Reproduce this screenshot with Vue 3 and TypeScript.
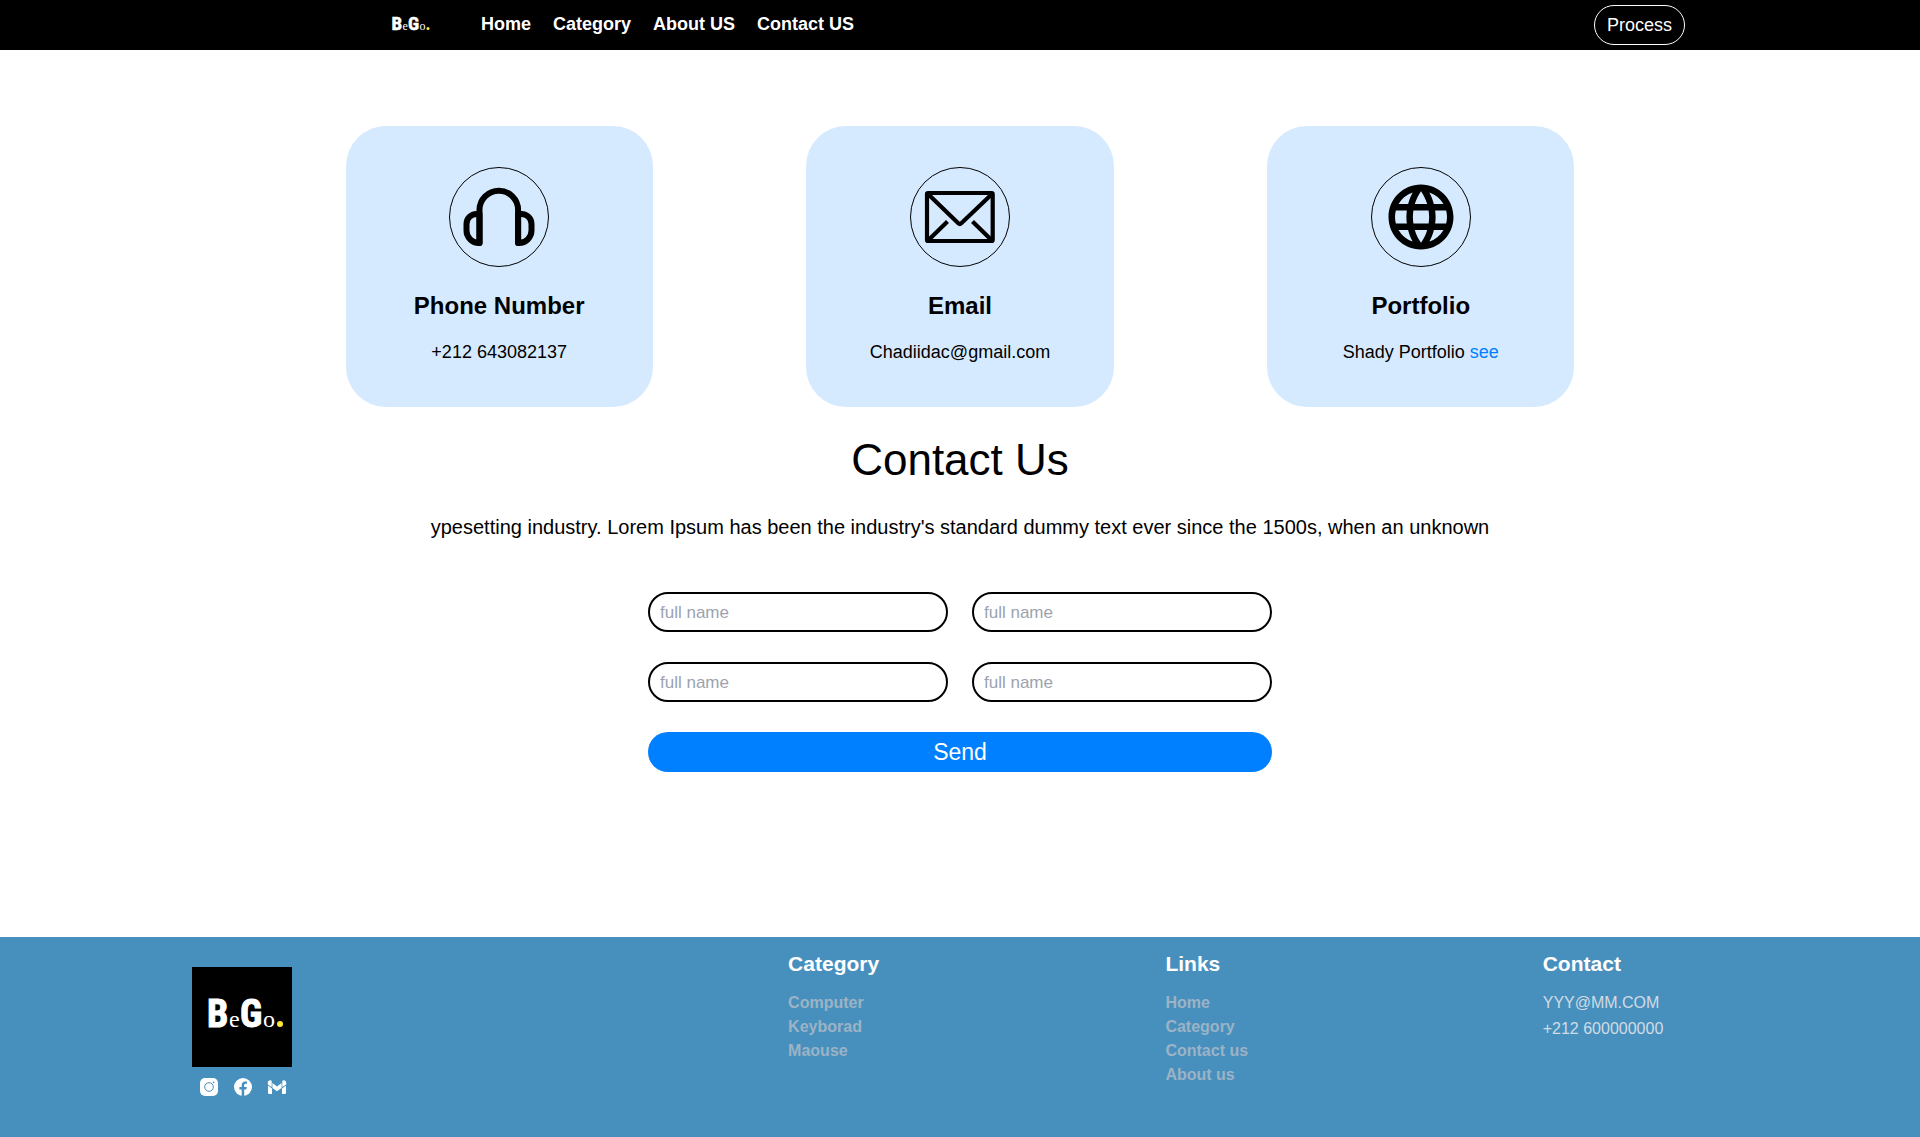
<script setup lang="ts">
import { ref } from 'vue'

interface NavLink {
  label: string
  href: string
}

const navLinks: NavLink[] = [
  { label: 'Home', href: '#home' },
  { label: 'Category', href: '#category' },
  { label: 'About US', href: '#about' },
  { label: 'Contact US', href: '#contact' },
]

const categoryLinks: NavLink[] = [
  { label: 'Computer', href: '#computer' },
  { label: 'Keyborad', href: '#keyboard' },
  { label: 'Maouse', href: '#mouse' },
]

const siteLinks: NavLink[] = [
  { label: 'Home', href: '#home' },
  { label: 'Category', href: '#category' },
  { label: 'Contact us', href: '#contact' },
  { label: 'About us', href: '#about' },
]

const fields = ref<string[]>(['', '', '', ''])
</script>

<template>
  <div class="page">
    <header class="topbar">
      <a class="brand" href="#home">
        <svg class="logo logo-small" viewBox="0 0 100 100" role="img">
          <rect width="100" height="100" fill="#000" />
          <text class="logo-heavy" x="15" y="60">B</text>
          <text class="logo-light" x="37" y="60">e</text>
          <text class="logo-heavy" x="48" y="60">G</text>
          <text class="logo-light" x="71" y="60">o</text>
          <circle cx="88" cy="57" r="3" fill="#fdea3a" />
        </svg>
      </a>
      <nav class="menu">
        <a v-for="link in navLinks" :key="link.label" :href="link.href">{{ link.label }}</a>
      </nav>
      <button class="process" type="button">Process</button>
    </header>

    <main class="main">
      <section class="cards">
        <article class="card">
          <div class="badge">
            <svg viewBox="1 1 98 98" fill="none" stroke="#000" stroke-width="6" stroke-linejoin="round">
              <path d="M30.500 76V43a19.300 19.300 0 0 1 38.600 0V76" stroke-linecap="round" />
              <path d="M30.500 47h-3a10 10 0 0 0-10 10v6.500a12.500 12.500 0 0 0 12.500 12.500H30.500z" />
              <path d="M69.100 47h3.400a10 10 0 0 1 10 10v6.500a12.500 12.500 0 0 1-12.500 12.500H69.100z" />
            </svg>
          </div>
          <h2>Phone Number</h2>
          <p>+212 643082137</p>
        </article>
        <article class="card">
          <div class="badge">
            <svg viewBox="1 1 98 98" fill="none" stroke="#000" stroke-width="4.200" stroke-linejoin="round">
              <rect x="17" y="26" width="65.700" height="48" rx="1" />
              <path d="M18 27L48.300 56.300a2.200 2.200 0 0 0 3 0L82 27M18 73.500L37.500 54.500M82 73.500L62.500 54.500" />
            </svg>
          </div>
          <h2>Email</h2>
          <p>Chadiidac@gmail.com</p>
        </article>
        <article class="card">
          <div class="badge">
            <svg viewBox="-3.080 -3.080 30.160 30.160" fill="#000">
              <path d="M11.990 2C6.470 2 2 6.480 2 12s4.470 10 9.990 10C17.520 22 22 17.520 22 12S17.520 2 11.990 2zm6.930 6h-2.950a15.650 15.650 0 0 0-1.380-3.560A8.030 8.030 0 0 1 18.920 8zM12 4.040c.830 1.200 1.480 2.530 1.910 3.960h-3.820c.430-1.430 1.080-2.760 1.910-3.960zM4.260 14C4.100 13.360 4 12.690 4 12s.100-1.360.260-2h3.380c-.080.660-.140 1.320-.140 2s.060 1.340.140 2H4.260zm.820 2h2.950c.320 1.250.780 2.450 1.380 3.560A7.987 7.987 0 0 1 5.080 16zm2.950-8H5.080a7.987 7.987 0 0 1 4.330-3.560A15.650 15.650 0 0 0 8.030 8zM12 19.960c-.830-1.200-1.480-2.530-1.910-3.960h3.820c-.430 1.430-1.080 2.760-1.910 3.960zM14.340 14H9.660c-.090-.660-.160-1.320-.160-2s.070-1.350.160-2h4.680c.090.650.160 1.320.160 2s-.070 1.340-.160 2zm.250 5.560c.600-1.110 1.060-2.310 1.380-3.560h2.950a8.030 8.030 0 0 1-4.330 3.560zM16.360 14c.080-.660.140-1.320.140-2s-.060-1.340-.140-2h3.380c.160.640.260 1.310.260 2s-.100 1.360-.260 2h-3.380z" />
            </svg>
          </div>
          <h2>Portfolio</h2>
          <p>Shady Portfolio <a class="see" href="#portfolio">see</a></p>
        </article>
      </section>

      <section class="contact">
        <h1>Contact Us</h1>
        <p class="intro">
          ypesetting industry. Lorem Ipsum has been the industry's standard dummy text ever since the 1500s, when an unknown
        </p>
        <form class="form" @submit.prevent>
          <input
            v-for="(_, i) in fields"
            :key="i"
            v-model="fields[i]"
            type="text"
            placeholder="full name"
            aria-label="full name"
          />
          <button class="send" type="submit">Send</button>
        </form>
      </section>
    </main>

    <footer class="footer">
      <div class="about">
        <svg class="logo" viewBox="0 0 100 100" role="img">
          <rect width="100" height="100" fill="#000" />
          <text class="logo-heavy" x="15" y="60">B</text>
          <text class="logo-light" x="37" y="60">e</text>
          <text class="logo-heavy" x="48" y="60">G</text>
          <text class="logo-light" x="71" y="60">o</text>
          <circle cx="88" cy="57" r="3" fill="#fdea3a" />
        </svg>
        <div class="social">
          <a href="#instagram" aria-label="Instagram">
            <svg viewBox="0 0 20 20">
              <rect x="1" y="1" width="18" height="18" rx="5" fill="#fff" />
              <circle cx="10" cy="10" r="4.300" fill="none" stroke="#4790be" stroke-width="1" />
              <circle cx="14.600" cy="5.300" r="0.900" fill="#4790be" />
            </svg>
          </a>
          <a href="#facebook" aria-label="Facebook">
            <svg viewBox="0 0 20 20">
              <circle cx="10" cy="10" r="9" fill="#fff" />
              <path d="M8.700 19.500V12.500H6.400V9.900h2.300V8c0-2.400 1.400-3.600 3.500-3.600.8 0 1.500.1 1.800.2v2.200h-1.300c-1.100 0-1.500.6-1.500 1.400v1.700h2.600l-.4 2.600h-2.200v7z" fill="#4790be" />
            </svg>
          </a>
          <a href="#gmail" aria-label="Gmail">
            <svg viewBox="0 0 20 20" fill="#fff">
              <path d="M1 8.500L5 11.400V17H2.200Q1 17 1 15.800zM19 8.500L15 11.400V17h2.800Q19 17 19 15.800zM5.400 6L10 9.500 14.600 6v4.900L10 14.200 5.400 10.900z" />
              <path d="M.8 7.400V5.600C.8 3.400 3.200 2.500 4.700 3.700V9.900zM19.200 7.400V5.600c0-2.200-2.400-3.100-3.900-1.900v6.200z" />
            </svg>
          </a>
        </div>
      </div>
      <nav class="column">
        <h3>Category</h3>
        <ul>
          <li v-for="link in categoryLinks" :key="link.label"><a :href="link.href">{{ link.label }}</a></li>
        </ul>
      </nav>
      <nav class="column">
        <h3>Links</h3>
        <ul>
          <li v-for="link in siteLinks" :key="link.label"><a :href="link.href">{{ link.label }}</a></li>
        </ul>
      </nav>
      <address class="column">
        <h3>Contact</h3>
        <div class="details">
          <p>YYY@MM.COM</p>
          <p>+212 600000000</p>
        </div>
      </address>
    </footer>
  </div>
</template>

<style>
body {
  margin: 0;
  background: #fff;
}
</style>

<style scoped>
.page {
  display: flex;
  flex-direction: column;
  min-height: 100vh;
  font-family: "Liberation Sans", Arial, sans-serif;
  color: #000;
}

.page * {
  box-sizing: border-box;
}

h1,
h2,
h3,
p,
ul {
  margin: 0;
  padding: 0;
}

a {
  color: inherit;
  text-decoration: none;
}

button,
input {
  font-family: inherit;
}

.topbar {
  display: flex;
  align-items: center;
  height: 50px;
  padding: 0 235px 0 20%;
  background: #000;
  color: #fff;
}

.brand {
  display: flex;
  margin-right: 47px;
}

.logo {
  display: block;
  width: 100px;
  height: 100px;
}

.logo-small {
  width: 50px;
  height: 50px;
}

.logo-heavy {
  font-family: Impact, "Roboto Condensed", "Liberation Sans Narrow", "Liberation Sans", sans-serif;
  font-size: 38px;
  font-weight: 700;
  fill: #fff;
  stroke: #fff;
  stroke-width: 1px;
}

.logo-light {
  font-family: "Liberation Serif", serif;
  font-size: 24px;
  fill: #fff;
}

.menu {
  display: flex;
  gap: 22px;
  padding-bottom: 2px;
  font-size: 18px;
  font-weight: 700;
  line-height: 28px;
}

.process {
  height: 40px;
  margin-left: auto;
  padding: 0 12px;
  border: 1px solid #fff;
  border-radius: 20px;
  background: #000;
  color: #fff;
  font-size: 18px;
}

.main {
  flex: 1;
  display: flex;
  flex-direction: column;
  align-items: center;
  padding: 76px 0 60px;
}

.cards {
  display: flex;
  justify-content: space-around;
  width: 72%;
}

.card {
  display: flex;
  flex-direction: column;
  align-items: center;
  flex: 0 0 auto;
  width: calc(100% * 2 / 9);
  padding: 41px 0;
  border-radius: 40px;
  background: #d6eaff;
}

.badge {
  width: 100px;
  height: 100px;
  border: 1px solid #000;
  border-radius: 50%;
}

.badge svg {
  display: block;
  width: 100%;
  height: 100%;
}

.card h2 {
  margin-top: 23px;
  font-size: 24px;
  line-height: 32px;
}

.card p {
  margin-top: 16px;
  font-size: 18px;
  line-height: 28px;
}

.see {
  color: #007fff;
}

.contact {
  display: flex;
  flex-direction: column;
  align-items: center;
  padding-top: 29px;
  text-align: center;
}

.contact h1 {
  font-size: 44px;
  font-weight: 400;
  line-height: 48px;
}

.intro {
  margin-top: 29px;
  font-size: 20px;
  line-height: 28px;
}

.form {
  display: grid;
  grid-template-columns: 300px 300px;
  gap: 30px 24px;
  margin-top: 51px;
}

.form input {
  height: 40px;
  padding: 1px 10px 0;
  border: 2px solid #000;
  border-radius: 20px;
  background: #fff;
  color: #000;
  font-size: 17px;
}

.form input::placeholder {
  color: #9ca3af;
  opacity: 1;
}

.send {
  grid-column: 1 / -1;
  height: 40px;
  padding: 0;
  border: 0;
  border-radius: 20px;
  background: #007fff;
  color: #fff;
  font-size: 23px;
}

.footer {
  display: grid;
  grid-template-columns: 1.58fr 1fr 1fr 1fr;
  min-height: 200px;
  padding-left: 10%;
  background: #4790be;
  color: #fff;
}

.about {
  padding-top: 30px;
}

.social {
  display: flex;
  gap: 14px;
  padding: 10px 7px;
}

.social svg {
  display: block;
  width: 20px;
  height: 20px;
}

.column {
  padding-top: 11px;
  font-size: 16px;
  font-style: normal;
  line-height: 24px;
}

.column h3 {
  margin-bottom: 11px;
  font-size: 21px;
  line-height: 32px;
}

.column ul {
  list-style: none;
  color: #9cb3c6;
  font-weight: 700;
}

.details {
  color: #d1dbe5;
}

.details p + p {
  margin-top: 2px;
}
</style>
